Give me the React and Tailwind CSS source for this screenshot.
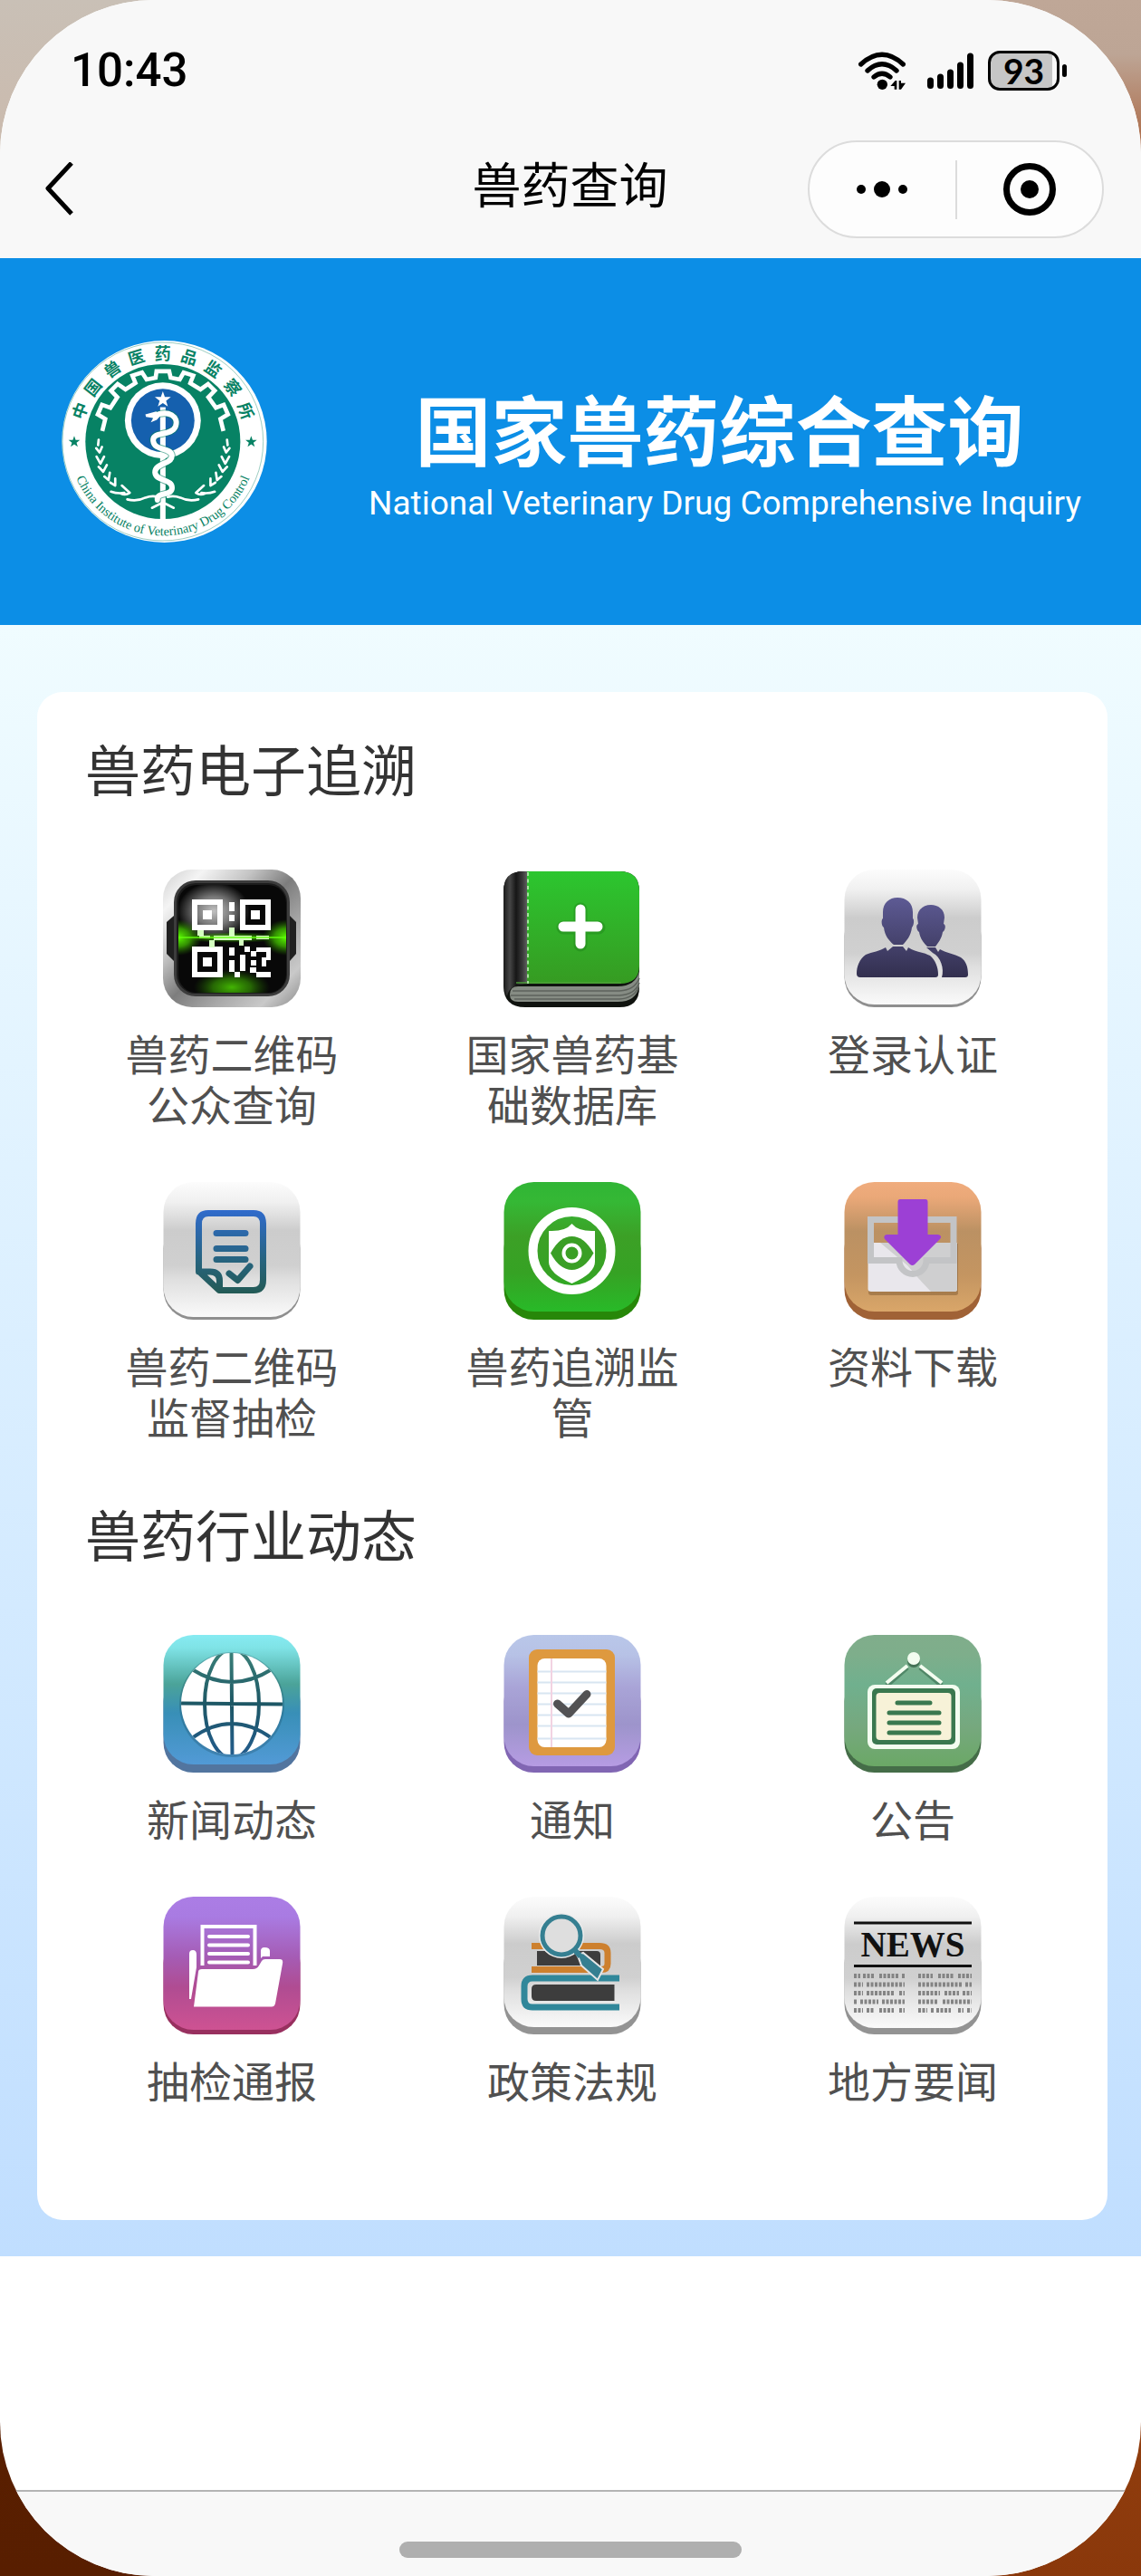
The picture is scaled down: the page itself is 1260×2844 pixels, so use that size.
import React from "react";

const GREY = [
  ["0%", "#fcfcfc"],
  ["15%", "#f0f0f0"],
  ["36%", "#cccccc"],
  ["62%", "#d0d0d0"],
  ["72%", "#dfdfdf"],
  ["100%", "#fafafa"],
];

// Rounded app tile: a darker base and a gradient face lying on it
function Tile({ id, stops, edge, face = 143, children }) {
  return (
    <svg viewBox="0 0 152 152" className="h-[152px] w-[152px]" aria-hidden="true">
      <defs>
        <linearGradient id={id} x1="0" y1="0" x2="0" y2="1">
          {stops.map(([offset, color]) => (
            <stop key={offset} offset={offset} stopColor={color} />
          ))}
        </linearGradient>
      </defs>
      <rect x="0.5" y="40" width="151" height="112" rx="33" fill={edge} />
      <rect x="0.5" width="151" height={face} rx="33" fill={`url(#${id})`} />
      {children}
    </svg>
  );
}

function QrIcon() {
  const finders = [[35, 36], [88, 36], [35, 88]];
  const modules = [
    [73, 36, 6, 10], [73, 50, 6, 7], [73, 64, 6, 10], [38, 67, 7, 6], [56, 73, 42, 5],
    [40, 73, 12, 3], [103, 73, 14, 4], [51, 78, 6, 8], [84, 78, 5, 6], [73, 86, 6, 9],
    [90, 85, 6, 6], [97, 90, 6, 6], [103, 86, 16, 5], [85, 94, 6, 18], [73, 100, 6, 13],
    [79, 113, 6, 6], [97, 100, 6, 6], [109, 97, 5, 10], [114, 91, 5, 9], [96, 108, 7, 6],
    [103, 113, 16, 6],
  ];
  return (
    <svg viewBox="0 0 152 152" className="h-[152px] w-[152px]" aria-hidden="true">
      <defs>
        <linearGradient id="qr-frame" x1="0" y1="0" x2="1" y2="1">
          <stop offset="0" stopColor="#cfcfcf" />
          <stop offset="0.15" stopColor="#f4f4f4" />
          <stop offset="0.33" stopColor="#c4c4c4" />
          <stop offset="0.5" stopColor="#7d7d7d" />
          <stop offset="0.68" stopColor="#a8a8a8" />
          <stop offset="0.85" stopColor="#c9c9c9" />
          <stop offset="1" stopColor="#8b8b8b" />
        </linearGradient>
        <radialGradient id="qr-green">
          <stop offset="0" stopColor="#5cff00" />
          <stop offset="0.5" stopColor="#46cc00" stopOpacity="0.7" />
          <stop offset="1" stopColor="#2a8000" stopOpacity="0" />
        </radialGradient>
        <radialGradient id="qr-shine">
          <stop offset="0" stopColor="#fff" stopOpacity="0.75" />
          <stop offset="0.5" stopColor="#fff" stopOpacity="0.45" />
          <stop offset="1" stopColor="#fff" stopOpacity="0" />
        </radialGradient>
        <clipPath id="qr-screen">
          <rect x="17" y="17" width="119" height="119" rx="20" />
        </clipPath>
      </defs>
      <rect width="152" height="152" rx="32" fill="url(#qr-frame)" />
      <path d="M12 51 L4 58 V93 L12 101 H140 L147 93 V58 L140 51 Z" fill="#202020" />
      <rect x="12" y="12" width="128" height="128" rx="24" fill="#3c3c3c" />
      <rect x="15" y="15" width="122" height="122" rx="21" fill="#1c1c1c" />
      <rect x="17" y="17" width="119" height="119" rx="20" fill="#080808" />
      <g clipPath="url(#qr-screen)">
        <ellipse cx="56" cy="46" rx="40" ry="32" fill="url(#qr-shine)" />
        <ellipse cx="76" cy="130" rx="42" ry="20" fill="url(#qr-green)" opacity="0.7" />
        <ellipse cx="17" cy="75" rx="26" ry="20" fill="url(#qr-green)" />
        <ellipse cx="136" cy="75" rx="26" ry="20" fill="url(#qr-green)" />
        <ellipse cx="76" cy="75" rx="60" ry="6" fill="url(#qr-green)" opacity="0.7" />
      </g>
      {finders.map(([x, y]) => (
        <g key={`${x}-${y}`}>
          <rect x={x} y={y} width="28" height="28" fill="none" stroke="#fff" strokeWidth="6" />
          <rect x={x + 9} y={y + 9} width="10" height="10" fill="#fff" />
        </g>
      ))}
      {modules.map(([x, y, w, h]) => (
        <rect key={`${x}-${y}`} x={x} y={y} width={w} height={h} fill={y > 63 && y < 79 ? "#d4ffc0" : "#fff"} />
      ))}
      <path d="M17 75 H136" stroke="#62ff0c" strokeWidth="2" opacity="0.7" />
    </svg>
  );
}

function BookIcon() {
  return (
    <svg viewBox="0 0 152 152" className="h-[152px] w-[152px]" aria-hidden="true">
      <defs>
        <linearGradient id="book-cover" x1="0" y1="0" x2="0" y2="1">
          <stop offset="0" stopColor="#2cc62f" />
          <stop offset="1" stopColor="#369b22" />
        </linearGradient>
        <linearGradient id="book-spine" x1="0" y1="0" x2="1" y2="0">
          <stop offset="0" stopColor="#1b1b1b" />
          <stop offset="0.25" stopColor="#464646" />
          <stop offset="0.5" stopColor="#161616" />
          <stop offset="0.75" stopColor="#3a3a3a" />
          <stop offset="1" stopColor="#6b6b6b" />
        </linearGradient>
      </defs>
      <path d="M0 24 Q0 2 22 2 H128 Q150 2 150 24 V130 Q150 152 128 152 H24 Q0 152 0 128 Z" fill="#10130f" />
      <path d="M0 24 Q0 2 22 2 H28 V126 Q6 126 4 140 Q0 134 0 124 Z" fill="url(#book-spine)" />
      <path d="M16 129 H126 Q146 129 150 112 V128 Q147 146 126 146 H16 Q7 146 7 138 Q7 129 16 129 Z" fill="#868c84" />
      <path
        d="M10 134 H128 Q145 133 150 120 M8 139 H128 Q145 138 150 125 M12 143 H128 Q144 142 149 130"
        fill="none"
        stroke="#5d625c"
        strokeWidth="1.5"
      />
      <path d="M26 2 H128 Q150 2 150 24 V106 Q150 126 128 126 H26 Z" fill="url(#book-cover)" />
      <path d="M14 125 H130" stroke="#4da238" strokeWidth="2" opacity="0.7" />
      <path d="M27 3 V126" stroke="#c6f7c0" strokeWidth="1.5" strokeDasharray="4 3.5" />
      <path d="M85 44 V83 M66 64 H105" stroke="#1b7a18" strokeWidth="15" strokeLinecap="round" opacity="0.35" />
      <path d="M85 44 V82 M66 63 H104" stroke="#fff" strokeWidth="11" strokeLinecap="round" />
    </svg>
  );
}

function PeopleIcon() {
  return (
    <Tile id="people" stops={GREY} edge="#8f8f8f" face={149}>
      <defs>
        <linearGradient id="people-ink" gradientUnits="userSpaceOnUse" x1="0" y1="30" x2="0" y2="120">
          <stop offset="0" stopColor="#5e5b95" />
          <stop offset="1" stopColor="#322f4e" />
        </linearGradient>
      </defs>
      <g fill="url(#people-ink)">
        <path d="M96 39 C104 39 111 44 111 53 L110 60 C113 61 112 67 109 69 C108 76 104 81 101 85 H92 C88 81 84 76 83 69 C80 67 79 61 82 60 L81 53 C81 44 88 39 96 39 Z" />
        <path d="M91 86 H101 L104 91 L106 88 C112 92 122 93 129 97 C135 101 137 108 137 116 Q137 119 134 119 H108 C111 110 107 96 98 92 Z" />
        <path d="M59 31 C69 31 76 37 76 47 V54 C78 55 77 62 75 64 C74 73 69 79 65 83 H55 C50 79 45 73 44 64 C41 62 41 55 43 54 V47 C43 37 50 31 59 31 Z" />
        <path d="M54 85 H65 L69 90 L71 86 C78 91 88 91 95 95 C101 100 104 108 104 116 Q104 119 101 119 H18 Q14 119 14 115 C14 107 17 99 24 94 C31 91 40 90 46 86 L48 90 Z" />
      </g>
    </Tile>
  );
}

function SpotCheckIcon() {
  return (
    <Tile id="spot" stops={GREY} edge="#8f8f8f" face={149}>
      <defs>
        <linearGradient id="spot-ink" gradientUnits="userSpaceOnUse" x1="0" y1="31" x2="0" y2="123">
          <stop offset="0" stopColor="#306bcc" />
          <stop offset="0.6" stopColor="#27647f" />
          <stop offset="1" stopColor="#235a55" />
        </linearGradient>
      </defs>
      <g fill="none" stroke="url(#spot-ink)" strokeWidth="7" strokeLinecap="round" strokeLinejoin="round">
        <path d="M39.5 99 V46 Q39.5 34.5 50 34.5 H100 Q110.500 34.5 110.5 46 V108 Q110.5 119.5 100 119.5 H62 L40 99 H52 Q62.5 99 62.5 109 V119" />
        <path d="M59 56.5 H91 M59 73.5 H91 M59 85.5 H91 M73 101 L82.5 108.500 L96 93" />
      </g>
    </Tile>
  );
}

function MonitorIcon() {
  return (
    <Tile
      id="monitor"
      stops={[["0%", "#30b535"], ["15%", "#35b835"], ["42%", "#3ca026"], ["70%", "#36a224"], ["100%", "#28ba28"]]}
      edge="#278709"
    >
      <circle cx="75.5" cy="76" r="43" fill="none" stroke="#fff" strokeWidth="10" />
      <path d="M75.5 46 Q83 55 101 54 V88 Q101 101 75.5 112 Q50 101 50 88 V54 Q68 55 75.5 46 Z" fill="#fff" />
      <path d="M52 78.5 Q62 60 75.5 60 Q89 60 99.5 78.5 Q89 97 75.5 97 Q62 97 52 78.5 Z" fill="#3a9f25" />
      <circle cx="75.5" cy="78.5" r="9" fill="none" stroke="#fff" strokeWidth="4" />
    </Tile>
  );
}

function DownloadIcon() {
  return (
    <Tile
      id="download"
      stops={[["0%", "#f0ac7d"], ["12%", "#eaa878"], ["38%", "#bb9163"], ["72%", "#c49561"], ["100%", "#d9a669"]]}
      edge="#a06236"
    >
      <path d="M27 68 H126 V123 Q126 125 122 125 H30 Q27 125 27 122 Z" fill="#6d4a28" opacity="0.4" />
      <path d="M26.5 67 H125 V118 Q125 121 122 121 H30 Q26.5 121 26.5 118 Z" fill="#e9e7ec" />
      <path d="M40 67 H125 V118 Q125 121 122 121 H96 L82 106 L70 92 Z" fill="#cfcfd0" />
      <path d="M29.5 86.5 V41.5 H121 V86.5 H91 A15 15 0 0 1 61 86.5 Z" fill="none" stroke="#c3c4c6" strokeWidth="7" />
      <path
        d="M62 19 H90 Q92.5 19 92.5 22 V58 H104 Q109 59 106 63 L78 91 Q75.5 93 73 91 L45 63 Q43 59 47 58 H59.5 V22 Q59.5 19 62 19 Z"
        fill="#9c40d5"
      />
    </Tile>
  );
}

function GlobeIcon() {
  return (
    <Tile
      id="globe"
      stops={[["0%", "#86ebf2"], ["10%", "#7fe3e6"], ["38%", "#4ba399"], ["60%", "#388fb7"], ["100%", "#529ad6"]]}
      edge="#52759f"
    >
      <defs>
        <linearGradient id="globe-line" gradientUnits="userSpaceOnUse" x1="0" y1="20" x2="0" y2="132">
          <stop offset="0" stopColor="#3a7f78" />
          <stop offset="0.5" stopColor="#1d5765" />
          <stop offset="1" stopColor="#235c8c" />
        </linearGradient>
        <clipPath id="globe-clip">
          <circle cx="76" cy="76" r="56" />
        </clipPath>
      </defs>
      <circle cx="76" cy="77" r="58" fill="#123f55" opacity="0.25" />
      <circle cx="76" cy="76" r="56" fill="#fff" />
      <g clipPath="url(#globe-clip)" fill="none" stroke="url(#globe-line)" strokeWidth="4">
        <ellipse cx="76" cy="76" rx="30" ry="60" />
        <path d="M75.5 18 L76.5 134 M18 75.5 L134 76.5 M32 38 Q76 66 120 38 M32 114 Q76 82 120 114" />
      </g>
    </Tile>
  );
}

function NoticeIcon() {
  return (
    <Tile
      id="notice"
      stops={[["0%", "#b9c7e9"], ["15%", "#b7c2e6"], ["40%", "#a9a4d7"], ["68%", "#9d94cb"], ["100%", "#b69ce3"]]}
      edge="#8166b3"
      face={145}
    >
      <rect x="28" y="16" width="95" height="117" rx="9" fill="#de993f" />
      <rect x="37.5" y="26" width="76" height="98" rx="8" fill="#fff" />
      <path
        d="M37.5 40.5 H113.5 M37.5 52.5 H113.5 M37.5 64.5 H113.5 M37.5 76.5 H113.5 M37.5 88.5 H113.5 M37.5 100.5 H113.5 M37.5 114.5 H113.5"
        stroke="#d8e5f1"
        strokeWidth="2"
      />
      <path d="M53 26 V124" stroke="#f2d3e2" strokeWidth="2" />
      <path d="M59.5 76 L72 87 L92 65.5" fill="none" stroke="#525254" strokeWidth="9" strokeLinecap="round" strokeLinejoin="round" />
    </Tile>
  );
}

function BoardIcon() {
  return (
    <Tile
      id="board"
      stops={[["0%", "#80ad8b"], ["15%", "#7eae8b"], ["38%", "#70b08e"], ["70%", "#76a87e"], ["100%", "#6ba866"]]}
      edge="#456d48"
      face={145}
    >
      <path d="M70 36 L47 56 M84 36 L108 56" stroke="#2c6043" strokeWidth="5" opacity="0.5" />
      <circle cx="77" cy="29" r="7" fill="#1f4a31" opacity="0.6" />
      <path d="M70 34 L47 53 M84 34 L108 53" stroke="#f3fdf0" strokeWidth="4" />
      <circle cx="77" cy="26" r="7" fill="#f3fdf0" />
      <rect x="26" y="55" width="102" height="71" rx="8" fill="#f3fdf0" />
      <rect x="31" y="59" width="92" height="62" rx="5" fill="#3a784f" />
      <rect x="35.5" y="64" width="83" height="52" rx="4" fill="#f7f2d8" />
      <path d="M59 75 H95 M50 86 H105 M50 97 H105 M50 108 H105" stroke="#3a784f" strokeWidth="5" strokeLinecap="round" />
    </Tile>
  );
}

function FolderIcon() {
  return (
    <Tile
      id="folder"
      stops={[["0%", "#ab7de5"], ["15%", "#a97be2"], ["45%", "#a55cb5"], ["68%", "#b04c92"], ["100%", "#ce5292"]]}
      edge="#98305f"
      face={147}
    >
      <path d="M29 63 Q29 59 33 59 Q37 59 37 64 V78 L31 113 H29 Z M108 60 Q108 56 112 56 Q118 56 118 60 V66 H110 L108 68 Z" fill="#fff" />
      <path d="M43.5 76 V33 H101.5 V76" fill="none" stroke="#fff" strokeWidth="4" />
      <path d="M51 44 H94 M51 53.5 H94 M51 63 H94 M51 72.5 H94" stroke="#fff" strokeWidth="4" strokeLinecap="round" />
      <path d="M43 80 H99 Q104 80 106 76 L109 71 Q110 69 113 69 H129 Q133 69 132 74 L124 118 Q123 121.5 120 121.5 H34 L39 83 Q39 80 43 80 Z" fill="#fff" />
    </Tile>
  );
}

function PolicyIcon() {
  return (
    <Tile id="policy" stops={GREY} edge="#939393" face={144}>
      <path d="M31 54.5 H106 Q115 54.5 115 62 V74 Q115 80.5 108 80.5 H31" fill="none" stroke="#cd802e" strokeWidth="7" />
      <path d="M37 60 H103 Q107 60 107 64 V76 H37 Z" fill="#3d3d3d" />
      <path d="M128 90 H32 Q23 90 23 99 V113 Q23 122 32 122 H128" fill="none" stroke="#30879a" strokeWidth="7" />
      <path d="M122.5 97 H36 Q31 97 31 102 V110 Q31 115 36 115 H122.5 Z" fill="#3d3d3d" />
      <circle cx="64" cy="43" r="25" fill="#ececec" />
      <path d="M78 58 L83 64 L88 62 L110 80 L104 92 L86 76 L83 68 Z" fill="#357f91" stroke="#e6e6e6" strokeWidth="2" />
      <circle cx="64" cy="43" r="21" fill="#dedede" stroke="#357f91" strokeWidth="5" />
      <path d="M77 57 L85 66" stroke="#357f91" strokeWidth="6" />
    </Tile>
  );
}

function NewsIcon() {
  return (
    <Tile id="news" stops={GREY} edge="#939393" face={145}>
      <path d="M11 29 H141 M11 76.5 H141" stroke="#111" strokeWidth="3" />
      <text x="76" y="66" textAnchor="middle" className="font-['Liberation_Serif',serif] text-[39px] font-bold" fill="#111">
        NEWS
      </text>
      <g stroke="#848484" strokeWidth="5" strokeDasharray="3 1.5">
        <path d="M11 87.5 H18 M21 87.5 H34 M39 87.5 H60 M64 87.5 H67 M82 87.5 H98 M104 87.5 H122 M126 87.5 H141" />
        <path d="M11 97 H21 M25 97 H67 M82 97 H131 M134 97 H141" />
        <path d="M11 106.5 H21 M25 106.5 H56 M61 106.5 H67 M82 106.5 H106 M111 106.5 H127 M131 106.5 H141" />
        <path d="M11 116 H14 M18 116 H38 M42 116 H67 M82 116 H104 M109 116 H141" />
        <path d="M11 125.5 H21 M25 125.5 H34 M39 125.5 H55 M61 125.5 H67 M82 125.5 H92 M96 125.5 H99 M102 125.5 H118 M126 125.5 H132 M136 125.5 H141" />
      </g>
    </Tile>
  );
}

const starPoints = (cx, cy, r) =>
  Array.from({ length: 10 }, (_, i) => {
    const a = (Math.PI / 5) * i - Math.PI / 2;
    const d = i % 2 ? r * 0.4 : r;
    return `${(cx + d * Math.cos(a)).toFixed(1)},${(cy + d * Math.sin(a)).toFixed(1)}`;
  }).join(" ");

const SNAKE =
  "M392 326 C440 305 474 330 462 362 C448 396 384 376 388 410 C392 444 446 430 450 458 C452 488 394 482 394 514 C396 546 456 534 450 570 C444 594 398 578 402 606";

function Laurel() {
  return (
    <g fill="none" stroke="#fff" strokeWidth="8" strokeLinecap="round" strokeLinejoin="round">
      <path d="M207 406 L205 424 M199 434 L210 448 L218 430 M200 462 L213 485 L225 462 M207 496 L222 512 L234 490 M226 528 L240 540 L244 515 M246 548 L262 558 L262 535 M248 578 Q270 586 292 582 M284 558 L310 582 Q296 592 280 584" />
      <path d="M302 604 Q335 612 362 598 Q385 590 404 596" />
      <path d="M384 632 L412 618" />
    </g>
  );
}

function Emblem() {
  return (
    <svg viewBox="85 77 680 670" className="h-[223px] w-[227px] shrink-0" role="img" aria-label="中国兽医药品监察所">
      <defs>
        <path id="emblem-arc" d="M108 412 A312 312 0 0 0 732 412" />
      </defs>
      <ellipse cx="425" cy="412" rx="340" ry="335" fill="#fff" />
      <ellipse cx="420" cy="412" rx="333" ry="329" fill="none" stroke="#078264" strokeWidth="2" opacity="0.6" />
      <circle cx="420" cy="412" r="257" fill="#078264" />
      <polyline
        points="219,377 229,337 204,322 218,290 246,300 269,265 248,243 270,221 296,239 329,218 319,193 351,183 366,206 396,200 399,179 441,179 446,200 476,206 489,183 521,193 511,218 545,239 570,221 592,243 571,265 596,300 622,290 636,322 611,337 621,377"
        fill="none"
        stroke="#fff"
        strokeWidth="14"
      />
      <circle cx="420" cy="342" r="126" fill="#fff" />
      <circle cx="420" cy="342" r="105" fill="#1560ae" />
      <polygon points={starPoints(420, 273, 28)} fill="#fff" />
      <rect x="411" y="298" width="18" height="374" fill="#fff" />
      <g fill="none" strokeLinecap="round">
        <path d={SNAKE} stroke="#078264" strokeWidth="24" opacity="0.6" />
        <path d={SNAKE} stroke="#fff" strokeWidth="18" />
      </g>
      <path d="M362 322 L398 312 L412 326 L400 340 L380 348 L388 334 L364 330 Z" fill="#fff" />
      <Laurel />
      <g transform="translate(840 0) scale(-1 1)">
        <Laurel />
      </g>
      <polygon points={starPoints(126, 413, 20)} fill="#078264" />
      <polygon points={starPoints(713, 413, 20)} fill="#078264" />
      <g fill="#078264">
        {[..."中国兽医药品监察所"].map((char, i) => (
          <text
            key={char}
            x="420"
            y="139"
            textAnchor="middle"
            transform={`rotate(${(i - 4) * 17.4} 420 412)`}
            className="font-['Noto_Sans_CJK_SC',sans-serif] text-[54px] font-bold"
          >
            {char}
          </text>
        ))}
        <text className="font-['Liberation_Serif',serif] text-[43px]" textAnchor="middle">
          <textPath href="#emblem-arc" startOffset="50%">China Institute of Veterinary Drug Control</textPath>
        </text>
      </g>
    </svg>
  );
}

function StatusBar() {
  return (
    <div className="flex h-[155px] items-center justify-between pr-[82px] pl-[78px]">
      <time className="font-['Roboto',sans-serif] text-[51px] leading-[60px] font-medium">10:43</time>
      <div className="flex items-center">
        <svg viewBox="0 0 156 126" className="mr-6 h-[42px] w-[52px]" aria-label="Wi-Fi">
          <g fill="none" stroke="#000" strokeWidth="16" strokeLinecap="round">
            <path d="M8 42 Q78 -22 148 42 M30 63 Q78 20 126 63 M51 84 Q78 62 105 84" />
          </g>
          <circle cx="79" cy="109" r="17" />
          <path d="M106 114 L122 96 H127 V125 H119 V114 Z M134 96 H141 V104 H156 L141 125 H134 Z" />
        </svg>
        <svg viewBox="0 0 51 42" className="mr-4 h-[42px] w-[51px]" aria-label="Signal">
          <path d="M3.5 32 V37.5 M14.5 28 V37.5 M25.5 23 V37.5 M36.5 15 V37.5 M47.5 5 V37.5" stroke="#000" strokeWidth="7" strokeLinecap="round" />
        </svg>
        <div className="flex h-11 w-[79px] items-center justify-center rounded-[13px] border-[3px] border-black bg-[linear-gradient(to_right,#c6c6c6_93%,#f8f8f8_93%)] font-['Lato',sans-serif] text-[39px] leading-[38px] font-bold">
          93
        </div>
        <span className="ml-[3px] h-3.5 w-[5px] rounded-full bg-black" />
      </div>
    </div>
  );
}

function NavBar() {
  return (
    <div className="grid grid-cols-[1fr_auto_1fr] items-center pr-[41px] pl-10">
      <button type="button" aria-label="返回" className="justify-self-start">
        <svg viewBox="-8 0 44 60" className="h-[60px] w-11">
          <path d="M31 1 L5 29 L31 57" fill="none" stroke="#000" strokeWidth="5" strokeLinejoin="round" />
        </svg>
      </button>
      <h1 className="pb-3.5 text-[54px] leading-[64px] font-normal">兽药查询</h1>
      <div className="flex h-[108px] w-[327px] items-center justify-self-end rounded-full border-2 border-[#dcdcdc] bg-[#fdfdfd]">
        <button type="button" aria-label="更多" className="flex flex-1 items-center justify-center gap-[9px]">
          <span className="h-2.5 w-2.5 rounded-full bg-black" />
          <span className="h-[18px] w-[18px] rounded-full bg-black" />
          <span className="h-2.5 w-2.5 rounded-full bg-black" />
        </button>
        <span className="h-[65px] w-0.5 bg-[#dcdcdc]" />
        <button type="button" aria-label="关闭" className="flex flex-1 items-center justify-center">
          <span className="flex h-[58px] w-[58px] items-center justify-center rounded-full border-[7px] border-black">
            <span className="h-5 w-5 rounded-full bg-black" />
          </span>
        </button>
      </div>
    </div>
  );
}

const sections = [
  {
    title: "兽药电子追溯",
    items: [
      { label: "兽药二维码公众查询", Icon: QrIcon },
      { label: "国家兽药基础数据库", Icon: BookIcon },
      { label: "登录认证", Icon: PeopleIcon },
      { label: "兽药二维码监督抽检", Icon: SpotCheckIcon },
      { label: "兽药追溯监管", Icon: MonitorIcon },
      { label: "资料下载", Icon: DownloadIcon },
    ],
  },
  {
    title: "兽药行业动态",
    items: [
      { label: "新闻动态", Icon: GlobeIcon },
      { label: "通知", Icon: NoticeIcon },
      { label: "公告", Icon: BoardIcon },
      { label: "抽检通报", Icon: FolderIcon },
      { label: "政策法规", Icon: PolicyIcon },
      { label: "地方要闻", Icon: NewsIcon },
    ],
  },
];

function Section({ title, items }) {
  return (
    <section>
      <h2 className="px-[26px] text-[61px] leading-[84px] text-[#333]">{title}</h2>
      <div className="mt-[70px] grid grid-cols-3 gap-y-[59px]">
        {items.map(({ label, Icon }) => (
          <a key={label} href="#" className="flex flex-col items-center gap-[22px]">
            <Icon />
            <span className="w-[246px] text-center text-[47px] leading-[56px] text-[#505050]">{label}</span>
          </a>
        ))}
      </div>
    </section>
  );
}

export default function App() {
  return (
    <div className="min-h-screen [background:linear-gradient(#c9c0b6,#cbb8aa_220px,#5a2000_2500px,#581e00)_left/50%_100%_no-repeat,linear-gradient(#bfa797,#bda595_60px,#a95f38_180px,#9c4a20_300px,#94400f_2600px,#8a380b)_right/50%_100%_no-repeat]">
      <div className="flex min-h-screen flex-col overflow-hidden rounded-[170px] bg-white font-['Noto_Sans_CJK_SC',sans-serif] text-black">
        <header className="bg-[#f8f8f8] pb-[22px]">
          <StatusBar />
          <NavBar />
        </header>

        <div className="flex items-center bg-[#0c8ee6] py-[91px] pr-16 pl-[68px] text-white">
          <Emblem />
          <div className="flex flex-1 flex-col items-center pt-9 pl-[110px] whitespace-nowrap">
            <p className="pr-3 text-[84px] leading-[88px] font-bold">国家兽药综合查询</p>
            <p className="mt-3 font-['Roboto',sans-serif] text-[37px] leading-[56px]">
              National Veterinary Drug Comprehensive Inquiry
            </p>
          </div>
        </div>

        <main className="bg-linear-to-b from-[#f0fcff] to-[#c0deff] pt-[74px] pr-[37px] pb-10 pl-[41px]">
          <div className="flex flex-col gap-[60px] rounded-[28px] bg-white px-[27px] pt-[42px] pb-[127px]">
            {sections.map((section) => (
              <Section key={section.title} {...section} />
            ))}
          </div>
        </main>

        <footer className="mt-auto flex h-[95px] items-end justify-center border-t-2 border-[#b4b4b4] bg-[#f8f8f8] pb-5">
          <span className="h-[18px] w-[378px] rounded-full bg-[#afafaf]" />
        </footer>
      </div>
    </div>
  );
}
